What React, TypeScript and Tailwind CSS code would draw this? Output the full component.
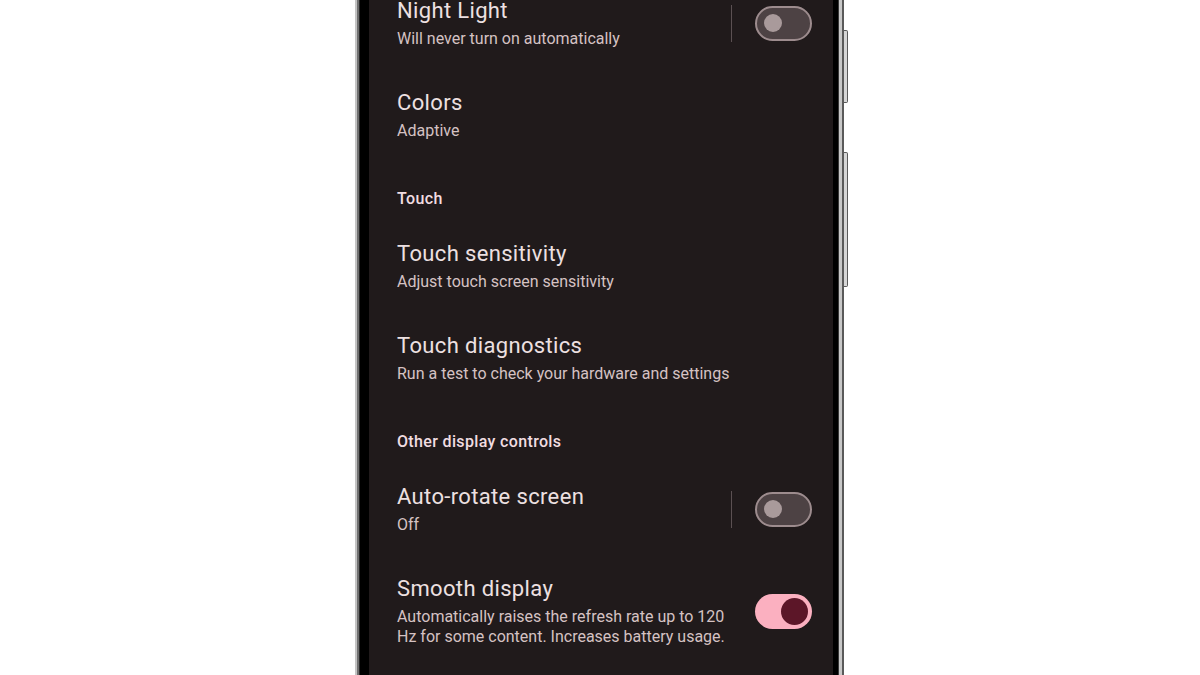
import React from "react";

const font = { fontFamily: '"Roboto", "Noto Sans", sans-serif' };

function Toggle({ on }: { on: boolean }) {
  if (on) {
    return (
      <div className="w-[57px] h-[35px] rounded-full bg-[#fbb0c0] flex items-center justify-end pr-[4px] shrink-0">
        <div className="w-[27px] h-[27px] rounded-full bg-[#5c1628]" />
      </div>
    );
  }
  return (
    <div className="w-[57px] h-[35px] rounded-full bg-[#4d4244] border-2 border-[#9d8c8e] flex items-center pl-[7px] shrink-0">
      <div className="w-[18px] h-[18px] rounded-full bg-[#a99a9b]" />
    </div>
  );
}

function Row({
  title,
  sub,
  toggle,
  divider,
  extra = "",
}: {
  title: string;
  sub: React.ReactNode;
  toggle?: "on" | "off";
  divider?: boolean;
  extra?: string;
}) {
  return (
    <div className={`flex items-center py-5 ${extra}`}>
      <div className="flex-1 min-w-0">
        <div className="text-[22px] leading-[28px] tracking-[0.35px] text-[#ede0e1]">{title}</div>
        <div className="mt-1 text-[16px] leading-[20px] text-[#d5c2c3]">{sub}</div>
      </div>
      {divider && <div className="w-px h-[37px] bg-[#5b5052] mr-[23px]" />}
      {toggle && <Toggle on={toggle === "on"} />}
    </div>
  );
}

function Header({ text }: { text: string }) {
  return (
    <div className="pt-7 pb-[11px] text-[16px] leading-[20px] font-medium tracking-[0.35px] text-[#f1dde1]">
      {text}
    </div>
  );
}

export default function App() {
  return (
    <div className="w-[1200px] h-[675px] bg-white overflow-hidden flex" style={font}>
      <div className="ml-[355px] flex h-full">
        {/* left frame */}
        <div className="w-[2px] bg-[#c4c4c4]" />
        <div className="w-[2px] bg-[#707070]" />
        <div className="w-px bg-[#2a2a2a]" />
        <div className="w-[9px] bg-black" />
        {/* screen */}
        <div className="w-[464px] h-full bg-[#201a1b] overflow-hidden pl-[28px] pr-[21px]">
          <Row
            title="Night Light"
            sub="Will never turn on automatically"
            toggle="off"
            divider
            extra="-mt-[23px]"
          />
          <Row title="Colors" sub="Adaptive" />
          <Header text="Touch" />
          <Row title="Touch sensitivity" sub="Adjust touch screen sensitivity" />
          <Row title="Touch diagnostics" sub="Run a test to check your hardware and settings" />
          <Header text="Other display controls" />
          <Row title="Auto-rotate screen" sub="Off" toggle="off" divider />
          <Row
            title="Smooth display"
            sub={
              <>
                Automatically raises the refresh rate up to 120
                <br />
                Hz for some content. Increases battery usage.
              </>
            }
            toggle="on"
          />
        </div>
        {/* right frame */}
        <div className="w-[5px] bg-black" />
        <div className="w-px bg-[#3a3a3a]" />
        <div className="w-[3px] bg-[#c8c8c8]" />
        <div className="w-[2px] bg-[#5a5a5a]" />
        <div className="w-[4px] flex flex-col">
          <div className="mt-[30px] h-[73px] bg-[#d6d6d6] border border-l-0 border-[#5a5a5a] rounded-r-[2px]" />
          <div className="mt-[49px] h-[135px] bg-[#d6d6d6] border border-l-0 border-[#5a5a5a] rounded-r-[2px]" />
        </div>
      </div>
    </div>
  );
}
